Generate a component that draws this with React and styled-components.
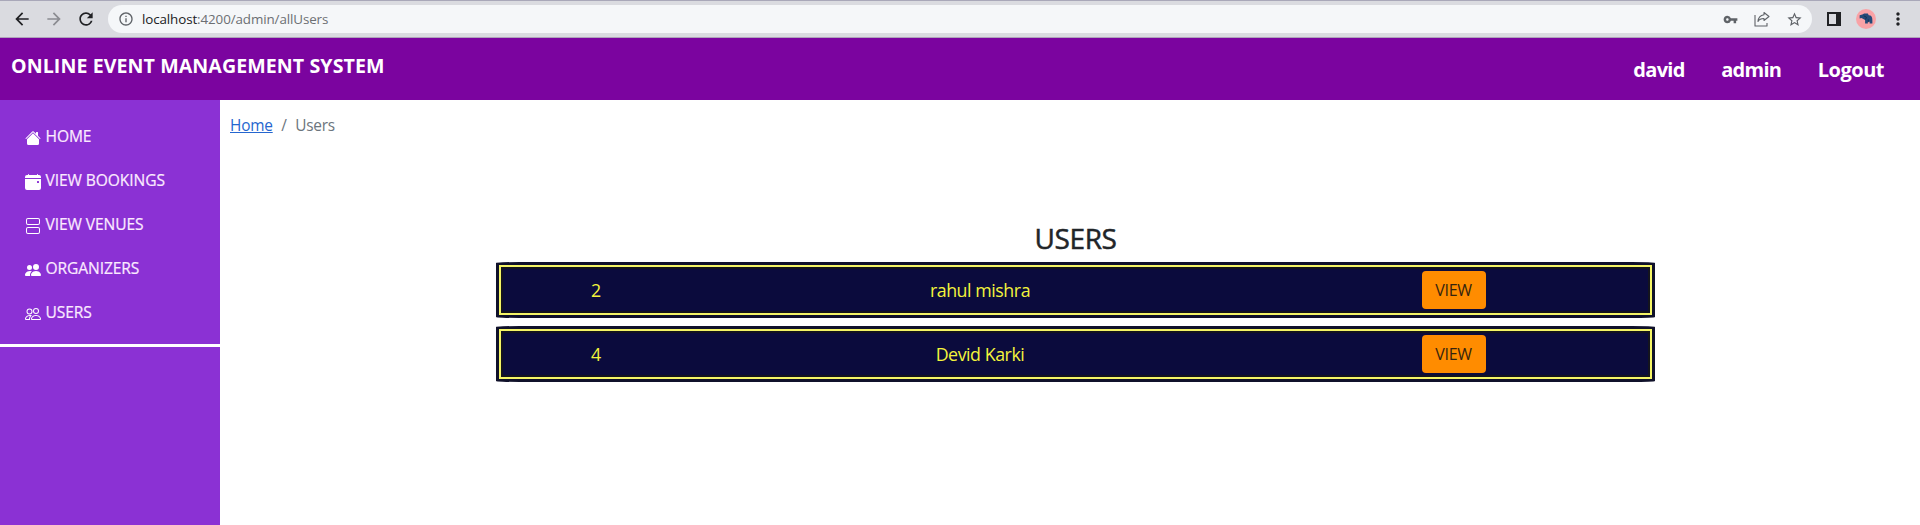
import React from "react";
import styled, { createGlobalStyle } from "styled-components";
import { MdArrowBack, MdArrowForward, MdRefresh, MdInfoOutline, MdVpnKey, MdStarBorder, MdMoreVert } from "react-icons/md";
import { BsHouseFill, BsCalendarEventFill, BsViewStacked, BsPeopleFill, BsPeople } from "react-icons/bs";

const Global = createGlobalStyle`
  * { box-sizing: border-box; }
  body { margin: 0; background: #fff; color: #212529; font: 16px/24px "Open Sans", "Noto Sans", sans-serif; overflow: hidden; }
`;

const Page = styled.div`
  display: flex;
  flex-direction: column;
  height: 525px;
`;

const BrowserBar = styled.div`
  height: 38px;
  flex: none;
  display: flex;
  align-items: center;
  background: #dadbe0;
  border-top: 1px solid #a9a8b9;
  border-bottom: 1px solid #b0a3bb;
  padding: 0 0 0 12px;
  color: #202124;
`;

const ToolIcon = styled.span`
  display: flex;
  justify-content: center;
  align-items: center;
  width: ${(p) => p.$w || 32}px;
  height: 20px;
  flex: none;
  color: ${(p) => p.$color || "inherit"};
`;

const AddressBar = styled.div`
  flex: 1;
  height: 28px;
  margin-left: 0;
  border-radius: 14px;
  background: #f5f7f9;
  display: flex;
  align-items: center;
  padding: 0 2px 0 10px;
  color: #5f6368;
`;

const Url = styled.span`
  flex: 1;
  margin-left: 8px;
  font-size: 13.4px;
  letter-spacing: -0.11px;
  color: #6c6f73;
  b { font-weight: 400; color: #202124; }
`;

const Navbar = styled.header`
  height: 62px;
  flex: none;
  display: flex;
  justify-content: space-between;
  background: #7b049f;
  color: #fff;
  font-weight: 700;
  padding: 0 36px 0 11px;
`;

const Brand = styled.div`
  margin-top: 13px;
  line-height: 30px;
  font-size: 19.6px;
  letter-spacing: 0.08px;
  white-space: nowrap;
`;

const NavLinks = styled.nav`
  display: flex;
  gap: 36.5px;
  margin-top: 17px;
  line-height: 30px;
  font-size: 20px;
  letter-spacing: -0.7px;
  span:last-child { letter-spacing: -0.5px; }
`;

const Body = styled.div`
  flex: 1;
  display: flex;
`;

const Sidebar = styled.aside`
  width: 220px;
  flex: none;
  background: #8b31d4;
`;

const Menu = styled.div`
  height: 247px;
  padding-top: 14px;
  border-bottom: 3px solid #fff;
`;

const MenuItem = styled.div`
  display: flex;
  align-items: center;
  height: 44px;
  padding-left: 25px;
  color: #fbeaff;
  font-size: 15.6px;
  letter-spacing: -0.1px;
  -webkit-text-stroke: 0.2px currentColor;
  svg { width: 16px; height: 16px; margin: 4px 4.5px 0 0; color: #fff; }
`;

const Main = styled.main`
  flex: 1;
  padding: 14px 10px 0;
`;

const Breadcrumb = styled.div`
  display: flex;
  gap: 8.5px;
  font-size: 15.4px;
  letter-spacing: -0.2px;
  color: #6c757d;
  a { color: #2566cf; text-decoration: underline; }
`;

const List = styled.section`
  width: 1159px;
  margin: 82px 0 0 266px;
`;

const Title = styled.h3`
  margin: 0 0 5px;
  height: 37px;
  line-height: 37px;
  font-size: 28px;
  font-weight: 500;
  text-align: center;
  letter-spacing: -0.4px;
  -webkit-text-stroke: 0.5px currentColor;
`;

const Row = styled.div`
  display: grid;
  grid-template-columns: 194px 1fr 373px;
  align-items: center;
  justify-items: center;
  height: 56px;
  margin-bottom: 8px;
  padding-right: 12px;
  background: #0b0b3d;
  border: 3px solid #10112a;
  border-radius: 2%;
  box-shadow: inset 0 0 0 2px #f5f566, inset 0 0 0 4px #14141e;
  color: #f4f43c;
  font-size: 17.8px;
`;

const Name = styled.span`
  letter-spacing: -0.45px;
`;

const ViewButton = styled.button`
  width: 64px;
  height: 38px;
  padding: 0;
  border: 0;
  border-radius: 4px;
  background: #ff8c00;
  color: #35240f;
  font: 16px/24px "Open Sans", sans-serif;
  letter-spacing: -0.3px;
`;

const menu = [
  [BsHouseFill, "HOME"],
  [BsCalendarEventFill, "VIEW BOOKINGS"],
  [BsViewStacked, "VIEW VENUES"],
  [BsPeopleFill, "ORGANIZERS"],
  [BsPeople, "USERS"],
];
const users = [[2, "rahul mishra"], [4, "Devid Karki"]];

const ShareIcon = () => (
  <svg width="16" height="16" viewBox="0 0 16 16" fill="none" stroke="currentColor" strokeWidth="1.1">
    <path d="M1 4v11h12v-3M10 1.500l5 4-5 4V7.500C7 7.500 5 8.500 4 10.500c.3-4 2.500-6.200 6-6.700z" strokeLinejoin="round" />
  </svg>
);
const PanelIcon = () => (
  <svg width="14" height="14" viewBox="0 0 14 14">
    <path d="M0 0h14v14H0zM2 2v10h7V2z" fillRule="evenodd" fill="currentColor" />
  </svg>
);
const Avatar = () => (
  <svg width="22" height="22" viewBox="0 0 22 22">
    <circle cx="11" cy="11" r="11" fill="#f9a2a6" />
    <path d="M4 7l3-1 2-1h4l1 2c3 0 4 2 4 5v4h-3v-2h-2v2h-3v-4l-2-1-2-1-2 .500z" fill="#234a78" />
    <path d="M8.500 7.500l3 1.500-1 2.500M13.500 11.500v3" stroke="#152d4f" fill="none" />
  </svg>
);

export default function App() {
  return (
    <Page>
      <Global />
      <BrowserBar>
        <ToolIcon $w={20}><MdArrowBack size={20} /></ToolIcon>
        <ToolIcon $w={44} $color="#8b8c91"><MdArrowForward size={20} /></ToolIcon>
        <ToolIcon $w={20}><MdRefresh size={20} /></ToolIcon>
        <ToolIcon $w={12} />
        <AddressBar>
          <MdInfoOutline size={16} />
          <Url><b>localhost</b>:4200/admin/allUsers</Url>
          <ToolIcon><MdVpnKey size={15} /></ToolIcon>
          <ToolIcon><ShareIcon /></ToolIcon>
          <ToolIcon><MdStarBorder size={17} /></ToolIcon>
        </AddressBar>
        <ToolIcon $w={44}><PanelIcon /></ToolIcon>
        <ToolIcon $w={20}><Avatar /></ToolIcon>
        <ToolIcon $w={44}><MdMoreVert size={20} /></ToolIcon>
      </BrowserBar>
      <Navbar>
        <Brand>ONLINE EVENT MANAGEMENT SYSTEM</Brand>
        <NavLinks><span>david</span><span>admin</span><span>Logout</span></NavLinks>
      </Navbar>
      <Body>
        <Sidebar>
          <Menu>
            {menu.map(([Icon, label]) => (
              <MenuItem key={label}><Icon />{label}</MenuItem>
            ))}
          </Menu>
        </Sidebar>
        <Main>
          <Breadcrumb><a>Home</a><span>/</span><span>Users</span></Breadcrumb>
          <List>
            <Title>USERS</Title>
            {users.map(([id, name]) => (
              <Row key={id}><span>{id}</span><Name>{name}</Name><ViewButton>VIEW</ViewButton></Row>
            ))}
          </List>
        </Main>
      </Body>
    </Page>
  );
}
